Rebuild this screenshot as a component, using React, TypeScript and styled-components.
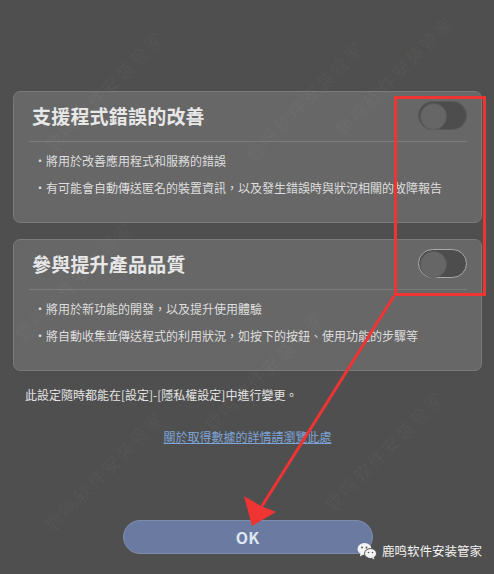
import styled, { createGlobalStyle } from 'styled-components';

const GlobalStyle = createGlobalStyle`
  html, body {
    margin: 0;
    padding: 0;
    background: #4f4f4f;
  }
  * {
    box-sizing: border-box;
  }
`;

const FONT = `"Noto Sans CJK TC", "Noto Sans CJK SC", "Noto Sans", sans-serif`;

const Page = styled.div`
  position: relative;
  width: 494px;
  height: 574px;
  overflow: hidden;
  background: #4f4f4f;
  font-family: ${FONT};
  padding: 91px 12px 0 13px;
  display: flex;
  flex-direction: column;
`;

const Card = styled.section`
  height: 132px;
  background: #676767;
  border: 1px solid #7a7a7a;
  border-radius: 7px;
  padding: 0 14px 0 15px;
  display: flex;
  flex-direction: column;
  & + & {
    margin-top: 16px;
  }
`;

const CardHeader = styled.div`
  height: 50px;
  display: flex;
  align-items: center;
  justify-content: space-between;
  padding: 0 0 2px 3px;
  border-bottom: 1px solid #7c7c7c;
`;

const Title = styled.h2`
  margin: 0;
  font-size: 19px;
  font-weight: 700;
  letter-spacing: 0.2px;
  color: #e8e8e8;
`;

const Toggle = styled.div<{ $hover?: boolean }>`
  position: relative;
  width: 49px;
  height: 29px;
  border-radius: 15px;
  background: #4d4d4d;
  border: 1px solid ${p => (p.$hover ? '#a9a9a9' : '#5a5a5a')};
  &::after {
    content: '';
    position: absolute;
    left: 1px;
    top: 1px;
    width: 25px;
    height: 25px;
    border-radius: 50%;
    background: #666;
    border: 1px solid #5c5c5c;
  }
`;

const Bullets = styled.ul`
  list-style: none;
  margin: 0;
  padding: 10px 0 0 5px;
  display: flex;
  flex-direction: column;
  gap: 9px;
`;

const Bullet = styled.li`
  font-size: 12px;
  line-height: 18px;
  color: #dedede;
  white-space: nowrap;
`;

const Note = styled.p`
  margin: 15px 0 0 12px;
  font-size: 12px;
  line-height: 18px;
  color: #e4e4e4;
`;

const Link = styled.a`
  align-self: center;
  margin: 24px 0 0 0;
  font-size: 12px;
  line-height: 18px;
  color: #7ea4d6;
  text-decoration: underline;
  cursor: pointer;
`;

const OkButton = styled.button`
  align-self: center;
  margin: 74px 0 0 0;
  width: 250px;
  height: 34px;
  border-radius: 17px;
  border: 1px solid #7f8cac;
  background: #6a7aa0;
  color: #dde8f2;
  font-family: ${FONT};
  font-size: 16px;
  font-weight: 700;
`;

const Overlay = styled.svg`
  position: absolute;
  left: 0;
  top: 0;
  pointer-events: none;
`;

const Watermark = styled.span<{ $x: number; $y: number }>`
  position: absolute;
  left: ${p => p.$x}px;
  top: ${p => p.$y}px;
  transform: rotate(-45deg);
  transform-origin: left top;
  font-size: 18px;
  line-height: 20px;
  color: rgba(255, 255, 255, 0.045);
  white-space: nowrap;
  letter-spacing: 2px;
  pointer-events: none;
`;

const Signature = styled.div`
  position: absolute;
  left: 357px;
  top: 541px;
  display: flex;
  align-items: center;
  gap: 5px;
  font-size: 12.5px;
  color: #f2f2f2;
`;

const marks = [
  { x: 40, y: 140 },
  { x: 240, y: 150 },
  { x: 330, y: 125 },
  { x: 10, y: 330 },
  { x: 200, y: 420 },
  { x: 320, y: 500 },
  { x: 40, y: 520 },
];

const WeChatIcon = () => (
  <svg width="20" height="18" viewBox="0 0 20 18">
    <ellipse cx="7.5" cy="7" rx="7" ry="6" fill="#f4f4f4" />
    <path d="M3.5 11.5 L2.8 14.5 L6.5 12.5 Z" fill="#f4f4f4" />
    <ellipse cx="13.5" cy="11.5" rx="6" ry="5" fill="#f4f4f4" stroke="#4f4f4f" strokeWidth="1" />
    <path d="M16.5 15 L17.5 17.5 L14.5 16 Z" fill="#f4f4f4" />
    <circle cx="5" cy="5.5" r="0.9" fill="#4f4f4f" />
    <circle cx="9.5" cy="5.5" r="0.9" fill="#4f4f4f" />
    <circle cx="11.5" cy="10.5" r="0.8" fill="#4f4f4f" />
    <circle cx="15.5" cy="10.5" r="0.8" fill="#4f4f4f" />
  </svg>
);

const App = () => {
  return (
    <Page>
      <GlobalStyle />
      {marks.map((m, i) => (
        <Watermark key={i} $x={m.x} $y={m.y}>鹿鸣软件安装管家</Watermark>
      ))}

      <Card>
        <CardHeader>
          <Title>支援程式錯誤的改善</Title>
          <Toggle />
        </CardHeader>
        <Bullets>
          <Bullet>・將用於改善應用程式和服務的錯誤</Bullet>
          <Bullet>・有可能會自動傳送匿名的裝置資訊，以及發生錯誤時與狀況相關的故障報告</Bullet>
        </Bullets>
      </Card>

      <Card>
        <CardHeader>
          <Title>參與提升產品品質</Title>
          <Toggle $hover />
        </CardHeader>
        <Bullets>
          <Bullet>・將用於新功能的開發，以及提升使用體驗</Bullet>
          <Bullet>・將自動收集並傳送程式的利用狀況，如按下的按鈕、使用功能的步驟等</Bullet>
        </Bullets>
      </Card>

      <Note>此設定隨時都能在[設定]-[隱私權設定]中進行變更。</Note>
      <Link>關於取得數據的詳情請瀏覽此處</Link>
      <OkButton>OK</OkButton>

      <Overlay width="494" height="574" viewBox="0 0 494 574">
        <rect x="395.5" y="97.5" width="89" height="197" fill="none" stroke="#f03434" strokeWidth="3" />
        <line x1="394" y1="296" x2="262" y2="506" stroke="#f03434" strokeWidth="3" />
        <polygon points="252,526 244,496 261,506 276,512" fill="#f03434" />
      </Overlay>

      <Signature>
        <WeChatIcon />
        <span>鹿鸣软件安装管家</span>
      </Signature>
    </Page>
  );
};

export default App;
